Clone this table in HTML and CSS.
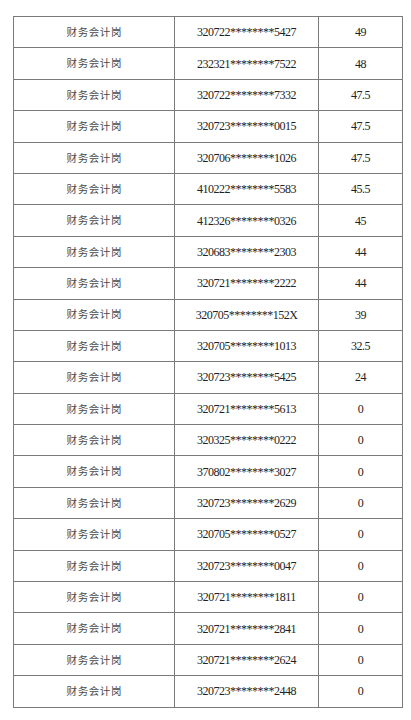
FILE: index.html
```html
<!DOCTYPE html>
<html lang="zh">
<head>
<meta charset="utf-8">
<link rel="stylesheet" href="styles.css">
</head>
<body>
<table class="list">
<colgroup><col class="c1"><col class="c2"><col class="c3"></colgroup>
<tbody>
<tr><td class="post">财务会计岗</td><td class="num">320722********5427</td><td class="num">49</td></tr>
<tr><td class="post">财务会计岗</td><td class="num">232321********7522</td><td class="num">48</td></tr>
<tr><td class="post">财务会计岗</td><td class="num">320722********7332</td><td class="num">47.5</td></tr>
<tr><td class="post">财务会计岗</td><td class="num">320723********0015</td><td class="num">47.5</td></tr>
<tr><td class="post">财务会计岗</td><td class="num">320706********1026</td><td class="num">47.5</td></tr>
<tr><td class="post">财务会计岗</td><td class="num">410222********5583</td><td class="num">45.5</td></tr>
<tr><td class="post">财务会计岗</td><td class="num">412326********0326</td><td class="num">45</td></tr>
<tr><td class="post">财务会计岗</td><td class="num">320683********2303</td><td class="num">44</td></tr>
<tr><td class="post">财务会计岗</td><td class="num">320721********2222</td><td class="num">44</td></tr>
<tr><td class="post">财务会计岗</td><td class="num">320705********152X</td><td class="num">39</td></tr>
<tr><td class="post">财务会计岗</td><td class="num">320705********1013</td><td class="num">32.5</td></tr>
<tr><td class="post">财务会计岗</td><td class="num">320723********5425</td><td class="num">24</td></tr>
<tr><td class="post">财务会计岗</td><td class="num">320721********5613</td><td class="num">0</td></tr>
<tr><td class="post">财务会计岗</td><td class="num">320325********0222</td><td class="num">0</td></tr>
<tr><td class="post">财务会计岗</td><td class="num">370802********3027</td><td class="num">0</td></tr>
<tr><td class="post">财务会计岗</td><td class="num">320723********2629</td><td class="num">0</td></tr>
<tr><td class="post">财务会计岗</td><td class="num">320705********0527</td><td class="num">0</td></tr>
<tr><td class="post">财务会计岗</td><td class="num">320723********0047</td><td class="num">0</td></tr>
<tr><td class="post">财务会计岗</td><td class="num">320721********1811</td><td class="num">0</td></tr>
<tr><td class="post">财务会计岗</td><td class="num">320721********2841</td><td class="num">0</td></tr>
<tr><td class="post">财务会计岗</td><td class="num">320721********2624</td><td class="num">0</td></tr>
<tr><td class="post">财务会计岗</td><td class="num">320723********2448</td><td class="num">0</td></tr>
</tbody>
</table>
</body>
</html>
```
FILE: styles.css
```css
html, body {
  margin: 0;
  padding: 0;
  background: #ffffff;
}
.list {
  margin: 16px 0 0 13px;
  width: 389px;
  border-collapse: collapse;
  table-layout: fixed;
}
.c1 { width: 161px; }
.c2 { width: 144px; }
.c3 { width: 84px; }
.list tr {
  height: 31.4px;
}
.list td {
  border: 1px solid #7a7a7a;
  padding: 0;
  text-align: center;
  vertical-align: middle;
  line-height: 1;
}
.post {
  font-family: "Noto Sans CJK SC", sans-serif;
  font-weight: 400;
  font-size: 10.5px;
  letter-spacing: 0.6px;
  color: #4a4a4a;
  text-indent: 0.6px;
  padding-top: 1px;
}
.num {
  font-family: "Liberation Serif", serif;
  font-size: 12px;
  letter-spacing: -0.5px;
  color: #222222;
  padding-top: 1px;
}
```
